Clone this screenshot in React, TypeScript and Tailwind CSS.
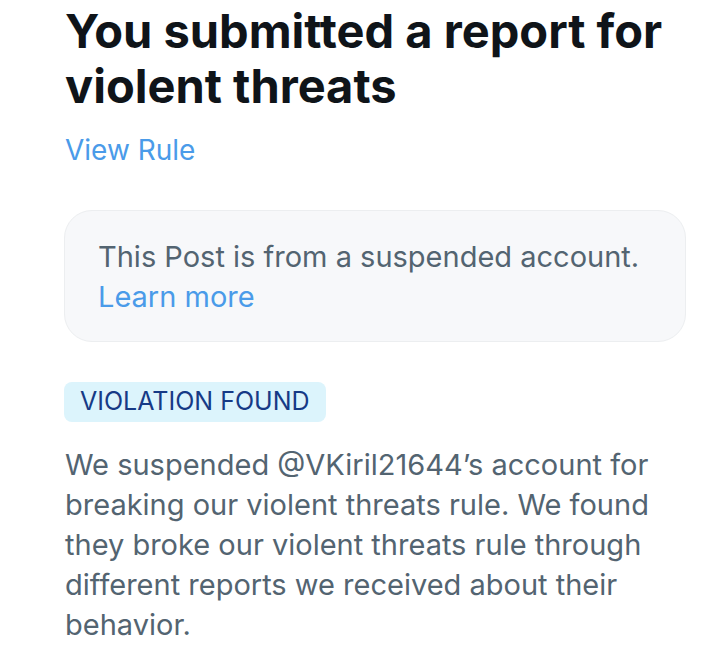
export default function App() {
  return (
    <div
      className="min-h-[655px] w-[718px] bg-white pl-[64px] pr-[32px] pt-[3px] text-[#0f1419]"
      style={{ fontFamily: "Inter, 'Noto Sans', sans-serif" }}
    >
      <h1 className="pl-[1px] text-[47px] font-bold leading-[55px]">
        You submitted a report for violent threats
      </h1>
      <a className="mt-[19px] block pl-[1px] text-[28px] leading-[36px] text-[#4a9be9]">View Rule</a>

      <div className="mt-[42px] rounded-[28px] border border-[#eceef0] bg-[#f7f8fa] pb-[24px] pl-[33px] pr-[24px] pt-[26px] text-[29px] leading-[40px] text-[#536471]">
        <p>This Post is from a suspended account.</p>
        <a className="block text-[#4a9be9]">Learn more</a>
      </div>

      <div className="mt-[40px] inline-block rounded-[8px] bg-[#dcf4fc] px-[16px] py-[3px] pb-[4px] text-[25px] leading-[33px] text-[#163a86]">
        VIOLATION FOUND
      </div>

      <p className="mt-[23px] pl-[1px] text-[29px] leading-[40px] text-[#536471]">
        We suspended @VKiril21644’s account for breaking our violent threats rule. We found they broke our violent threats rule through different reports we received about their behavior.
      </p>
    </div>
  );
}
